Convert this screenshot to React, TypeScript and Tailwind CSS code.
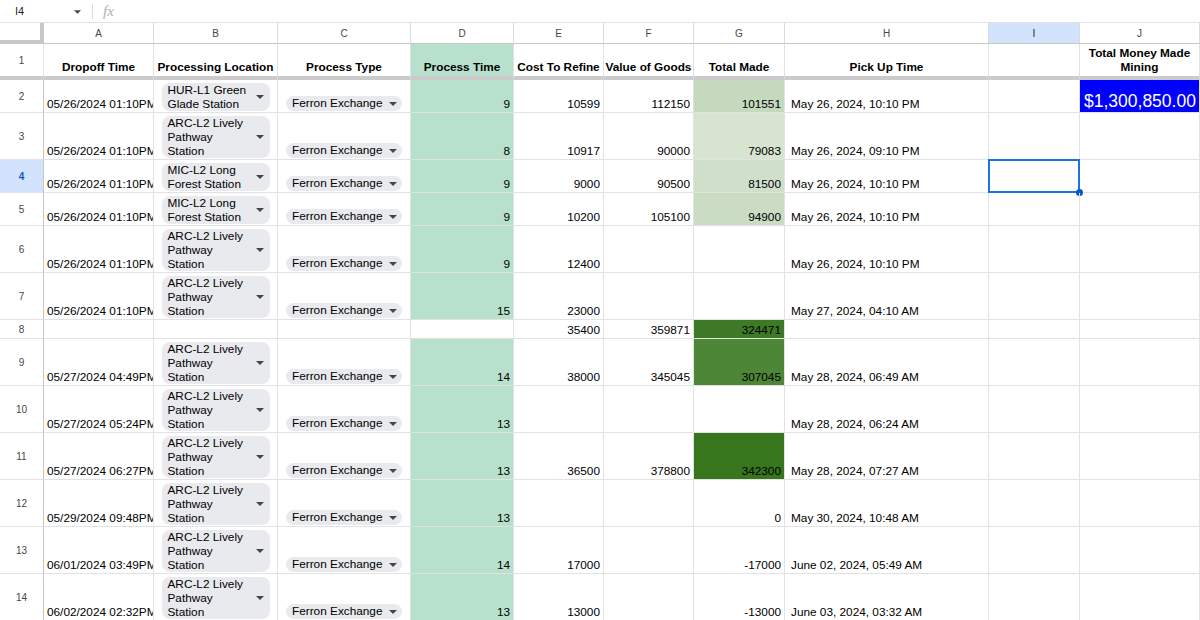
import clsx from "clsx";

type Row = {
  n: number;
  h: string;
  a?: string;
  b?: string[];
  c?: boolean;
  d?: string;
  e?: string;
  f?: string;
  g?: string;
  gb?: string;
  t?: string;
};

const ARC = ["ARC-L2 Lively", "Pathway", "Station"];
const MIC = ["MIC-L2 Long", "Forest Station"];

const rows: Row[] = [
  { n: 2, h: "h-[33px]", a: "05/26/2024 01:10PM", b: ["HUR-L1 Green", "Glade Station"], c: true, d: "9", e: "10599", f: "112150", g: "101551", gb: "bg-[#c5d9be]", t: "May 26, 2024, 10:10 PM" },
  { n: 3, h: "h-[47px]", a: "05/26/2024 01:10PM", b: ARC, c: true, d: "8", e: "10917", f: "90000", g: "79083", gb: "bg-[#d6e4d0]", t: "May 26, 2024, 09:10 PM" },
  { n: 4, h: "h-[33px]", a: "05/26/2024 01:10PM", b: MIC, c: true, d: "9", e: "9000", f: "90500", g: "81500", gb: "bg-[#d0dfca]", t: "May 26, 2024, 10:10 PM" },
  { n: 5, h: "h-[33px]", a: "05/26/2024 01:10PM", b: MIC, c: true, d: "9", e: "10200", f: "105100", g: "94900", gb: "bg-[#cbdcc4]", t: "May 26, 2024, 10:10 PM" },
  { n: 6, h: "h-[47px]", a: "05/26/2024 01:10PM", b: ARC, c: true, d: "9", e: "12400", t: "May 26, 2024, 10:10 PM" },
  { n: 7, h: "h-[47px]", a: "05/26/2024 01:10PM", b: ARC, c: true, d: "15", e: "23000", t: "May 27, 2024, 04:10 AM" },
  { n: 8, h: "h-[19px]", e: "35400", f: "359871", g: "324471", gb: "bg-[#3e7a25]" },
  { n: 9, h: "h-[47px]", a: "05/27/2024 04:49PM", b: ARC, c: true, d: "14", e: "38000", f: "345045", g: "307045", gb: "bg-[#4d8636]", t: "May 28, 2024, 06:49 AM" },
  { n: 10, h: "h-[47px]", a: "05/27/2024 05:24PM", b: ARC, c: true, d: "13", t: "May 28, 2024, 06:24 AM" },
  { n: 11, h: "h-[47px]", a: "05/27/2024 06:27PM", b: ARC, c: true, d: "13", e: "36500", f: "378800", g: "342300", gb: "bg-[#38761d]", t: "May 28, 2024, 07:27 AM" },
  { n: 12, h: "h-[47px]", a: "05/29/2024 09:48PM", b: ARC, c: true, d: "13", g: "0", t: "May 30, 2024, 10:48 AM" },
  { n: 13, h: "h-[47px]", a: "06/01/2024 03:49PM", b: ARC, c: true, d: "14", e: "17000", g: "-17000", t: "June 02, 2024, 05:49 AM" },
  { n: 14, h: "h-[47px]", a: "06/02/2024 02:32PM", b: ARC, c: true, d: "13", e: "13000", g: "-13000", t: "June 03, 2024, 03:32 AM" },
];

const cell = "flex shrink-0 overflow-hidden border-r border-b border-[#e2e2e2]";

function Caret({ className }: { className?: string }) {
  return (
    <svg width="8" height="4" viewBox="0 0 8 4" className={clsx("shrink-0", className)}>
      <path d="M0 0h8L4 4z" fill="#444746" />
    </svg>
  );
}

function Chip({ lines }: { lines: string[] }) {
  return (
    <div className="mx-auto flex w-[108px] items-center rounded-[8px] bg-[#e8eaed] pl-[6px] pr-[6px] leading-[14px]">
      <div className="flex-1">
        {lines.map((l) => (
          <div key={l} className="whitespace-nowrap">
            {l}
          </div>
        ))}
      </div>
      <Caret />
    </div>
  );
}

function Pill() {
  return (
    <div className="mx-auto flex h-[15px] w-[116px] items-center gap-[6px] rounded-full bg-[#e8eaed] pl-[6px] leading-[15px]">
      <span className="whitespace-nowrap">Ferron Exchange</span>
      <Caret />
    </div>
  );
}

function Num({ v }: { v?: string }) {
  return <div className="w-full pb-[1px] pr-[3px] text-right leading-[14px]">{v}</div>;
}

export default function App() {
  const letters = [
    ["A", "w-[110px]"],
    ["B", "w-[124px]"],
    ["C", "w-[133px]"],
    ["D", "w-[103px]"],
    ["E", "w-[90px]"],
    ["F", "w-[90px]"],
    ["G", "w-[91px]"],
    ["H", "w-[204px]"],
    ["I", "w-[91px]"],
    ["J", "w-[120px]"],
  ];

  return (
    <div className="h-[620px] w-[1200px] overflow-hidden bg-white font-['Liberation_Sans',Arial,sans-serif] text-[11.8px] text-black">
      {/* formula bar */}
      <div className="flex h-[23px] items-center border-b border-[#e2e2e2]">
        <div className="w-[74px] pl-[15px] text-[11px] text-[#1f1f1f]">I4</div>
        <Caret className="mt-[1px] w-[7px]" />
        <div className="ml-[11px] h-[15px] w-px bg-[#dadce0]" />
        <div className="ml-[10px] font-['Liberation_Serif',serif] text-[15px] italic text-[#b0b0b0]">fx</div>
      </div>

      {/* column letters */}
      <div className="flex h-[21px]">
        <div className="w-[44px] shrink-0 border-r-[4px] border-b-[4px] border-[#c7c7c7]" />
        {letters.map(([l, w]) => (
          <div
            key={l}
            className={clsx(
              "flex shrink-0 items-center justify-center border-r border-b border-r-[#dadada] border-b-[#c4c7c5] text-[10px]",
              w,
              l === "I" ? "bg-[#d3e3fd] text-[#1f1f1f]" : "text-[#444746]"
            )}
          >
            {l}
          </div>
        ))}
      </div>

      {/* header row */}
      <div className="flex h-[36px] font-bold">
        {[
          ["w-[44px]", ""],
          ["w-[110px]", "Dropoff Time"],
          ["w-[124px]", "Processing Location"],
          ["w-[133px]", "Process Type"],
          ["w-[103px]", "Process Time"],
          ["w-[90px]", "Cost To Refine"],
          ["w-[90px]", "Value of Goods"],
          ["w-[91px]", "Total Made"],
          ["w-[204px]", "Pick Up Time"],
          ["w-[91px]", ""],
          ["w-[120px]", "Total Money Made Mining"],
        ].map(([w, label], i) => (
          <div
            key={i}
            className={clsx(
              "flex shrink-0 items-end justify-center overflow-hidden border-r border-b-[4px] border-r-[#e2e2e2] border-b-[#cbcbcb] pb-[2px] text-center leading-[14px]",
              w,
              i === 0 && "border-r-[#c4c7c5]",
              i === 4 && "bg-[#b7e1cd]"
            )}
          >
            {i === 0 ? (
              <span className="mb-[6px] text-[10px] font-normal text-[#444746]">1</span>
            ) : (
              <span className={clsx(i === 10 ? "px-[4px]" : "whitespace-nowrap")}>{label}</span>
            )}
          </div>
        ))}
      </div>

      {/* data rows */}
      {rows.map((r) => (
        <div key={r.n} className={clsx("flex", r.h)}>
          <div
            className={clsx(
              "flex w-[44px] shrink-0 items-center justify-center border-r border-b border-r-[#c4c7c5] border-b-[#e2e2e2] text-[10px]",
              r.n === 4 ? "bg-[#d3e3fd] font-bold text-[#0b57d0]" : "text-[#444746]"
            )}
          >
            {r.n}
          </div>
          <div className={clsx(cell, "w-[110px] items-end")}>
            <div className="whitespace-nowrap pb-[1px] pl-[3px] leading-[14px]">{r.a}</div>
          </div>
          <div className={clsx(cell, "w-[124px] items-end pb-[1px]")}>{r.b && <Chip lines={r.b} />}</div>
          <div className={clsx(cell, "w-[133px] items-end pb-[1px]")}>{r.c && <Pill />}</div>
          <div className={clsx(cell, "w-[103px] items-end", r.d !== undefined && "bg-[#b7e1cd]")}>
            <Num v={r.d} />
          </div>
          <div className={clsx(cell, "w-[90px] items-end")}>
            <Num v={r.e} />
          </div>
          <div className={clsx(cell, "w-[90px] items-end")}>
            <Num v={r.f} />
          </div>
          <div className={clsx(cell, "w-[91px] items-end", r.gb)}>
            <Num v={r.g} />
          </div>
          <div className={clsx(cell, "w-[204px] items-end")}>
            <div className="whitespace-nowrap pb-[1px] pl-[6px] leading-[14px]">{r.t}</div>
          </div>
          <div className={clsx(cell, "relative w-[91px] overflow-visible")}>
            {r.n === 4 && (
              <div className="absolute -left-px -top-px h-[34px] w-[92px] border-2 border-[#1a73e8]">
                <div className="absolute -bottom-[4.5px] -right-[4.5px] h-[7px] w-[7px] rounded-full bg-[#0b57d0]" />
              </div>
            )}
          </div>
          <div className={clsx(cell, "w-[120px] items-end", r.n === 2 && "bg-[#0000ff]")}>
            {r.n === 2 && (
              <div className="whitespace-nowrap pb-[1px] pl-[4px] text-[17.5px] leading-[20px] text-white">$1,300,850.00</div>
            )}
          </div>
        </div>
      ))}
    </div>
  );
}
